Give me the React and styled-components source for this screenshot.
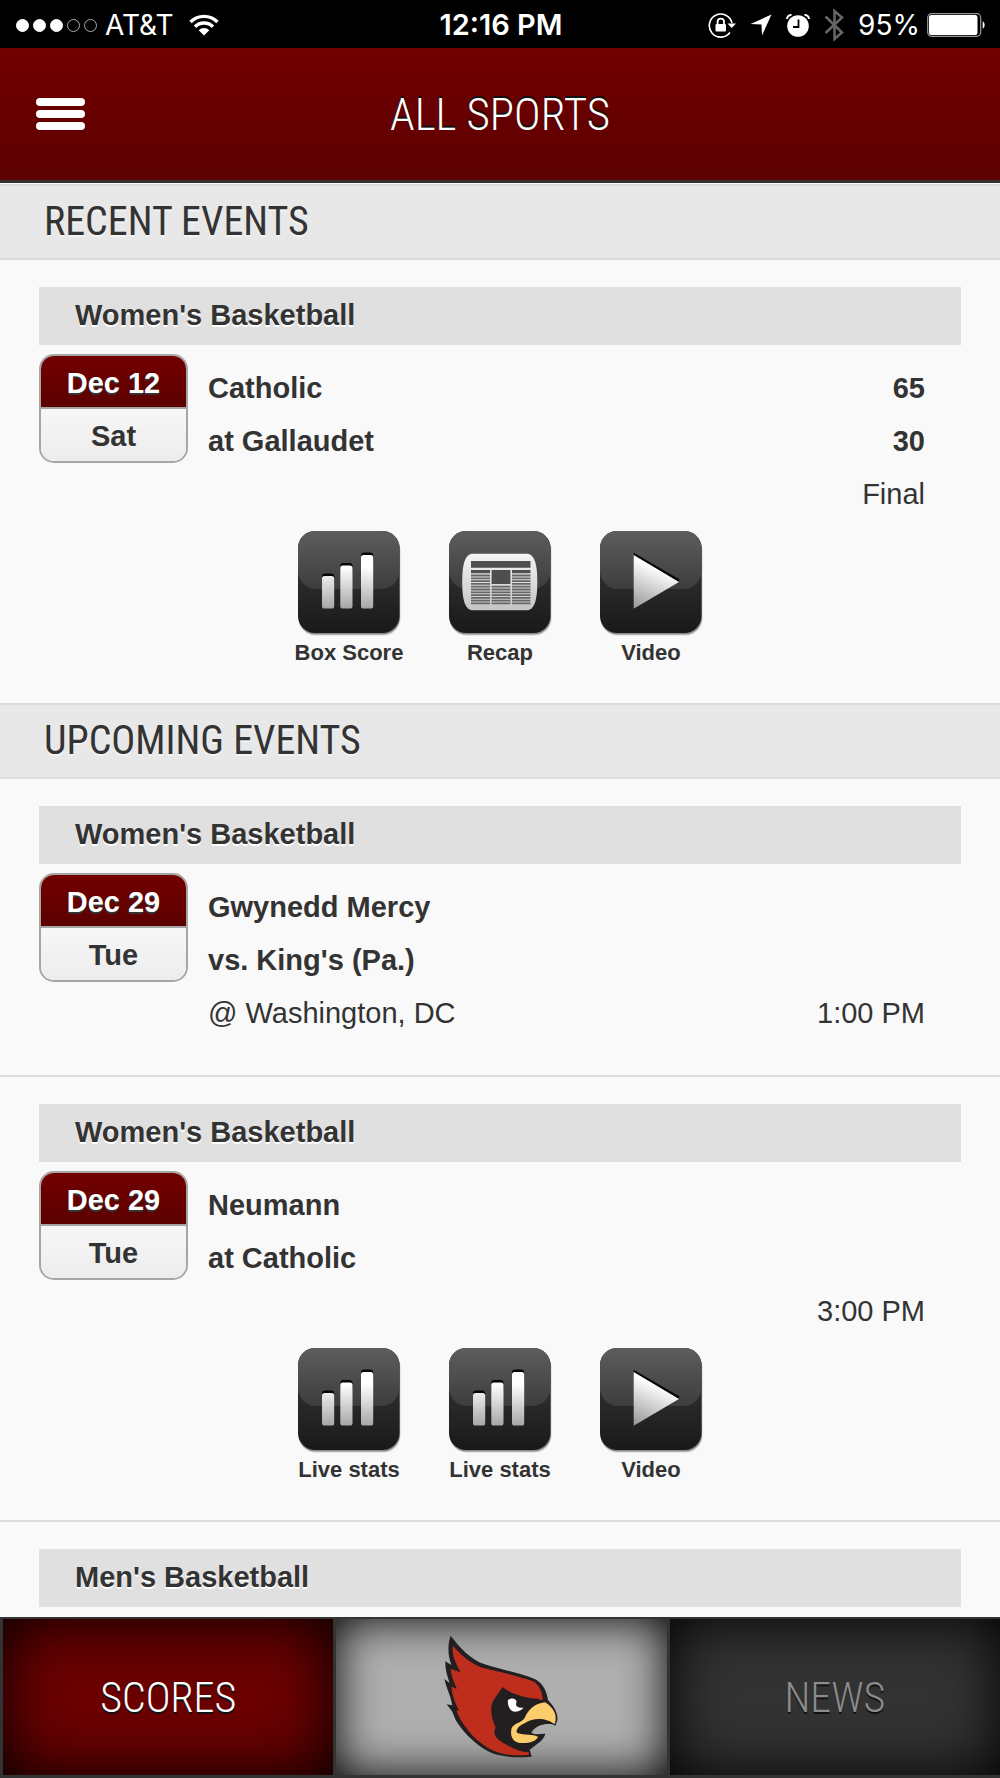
import React from 'react';
import styled, { createGlobalStyle } from 'styled-components';

const colors = {
  ink: '#333',
  page: '#f9f9f9',
  band: '#e8e8e8',
  line: '#dcdcdc',
  redTop: '#720000',
  redBottom: '#5c0000',
};

const fonts = {
  body: '"Liberation Sans", Arial, sans-serif',
  narrow: '"Roboto Condensed", "Arial Narrow", sans-serif',
  status: 'Inter, sans-serif',
};

const GlobalStyle = createGlobalStyle`
  * {
    box-sizing: border-box;
  }
  body {
    margin: 0;
    background: ${colors.page};
    color: ${colors.ink};
    font-family: ${fonts.body};
    font-size: 29px;
  }
  h1, h2, h3, p {
    margin: 0;
  }
`;

const Page = styled.div`
  display: flex;
  flex-direction: column;
  min-height: 100vh;
`;

const StatusBar = styled.div`
  display: grid;
  grid-template-columns: 1fr auto 1fr;
  align-items: center;
  height: 48px;
  padding: 0 14px 0 16px;
  background: #000;
  color: #fff;
  font-family: ${fonts.status};
  font-size: 28px;
  line-height: 50px;
`;

const StatusGroup = styled.div`
  display: flex;
  align-items: center;
  justify-content: ${(props) => props.$justify || 'flex-start'};
  gap: ${(props) => props.$gap}px;
`;

const Dots = styled.div`
  display: flex;
  gap: 4px;
`;

const Dot = styled.span`
  width: 13px;
  height: 13px;
  border: 1px solid ${(props) => (props.$on ? '#fff' : '#aaa')};
  border-radius: 50%;
  background: ${(props) => (props.$on ? '#fff' : 'transparent')};
`;

const Clock = styled.div`
  font-size: 29px;
  font-weight: 600;
`;

const Header = styled.header`
  display: grid;
  grid-template-columns: 1fr auto 1fr;
  align-items: center;
  height: 135px;
  padding: 0 36px;
  border-bottom: 3px solid ${colors.ink};
  background: linear-gradient(${colors.redTop}, ${colors.redBottom});
`;

const MenuButton = styled.button`
  display: flex;
  flex-direction: column;
  gap: 4px;
  width: 49px;
  padding: 0;
  border: 0;
  background: none;
`;

const MenuBar = styled.span`
  height: 8px;
  border-radius: 4px;
  background: #fff;
`;

const Title = styled.h1`
  color: #fff;
  font-family: ${fonts.narrow};
  font-size: 45px;
  font-weight: 350;
  text-shadow: 0 -2px 0 #111;
`;

const Main = styled.main`
  padding-top: 1px;
`;

const SectionTitle = styled.h2`
  height: 76px;
  padding: 0 44px;
  border: solid ${colors.line};
  border-width: 2px 0;
  background: ${colors.band};
  font-family: ${fonts.narrow};
  font-size: 40px;
  font-weight: 400;
  line-height: 72px;
  text-shadow: 0 2px 0 #f4f4f4;
`;

const EventBox = styled.article`
  padding: 27px 39px ${(props) => (props.$open ? 9 : 35)}px;

  & + & {
    border-top: 2px solid ${colors.line};
  }
`;

const Sport = styled.h3`
  height: 58px;
  padding: 0 36px;
  background: #e0e0e0;
  font-size: 29px;
  line-height: 57px;
  text-shadow: 0 2px 0 #fff;
`;

const EventBody = styled.div`
  display: flex;
  gap: 20px;
  padding: 9px 36px 0 0;
`;

const DateBox = styled.div`
  display: flex;
  flex-direction: column;
  width: 149px;
  height: 109px;
  overflow: hidden;
  border: 2px solid #a6a6a6;
  border-radius: 15px;
  font-weight: 700;
  line-height: 54px;
  text-align: center;
`;

const DateDay = styled.div`
  height: 53px;
  border-bottom: 2px solid #a6a6a6;
  background: linear-gradient(${colors.redTop}, ${colors.redBottom});
  color: #fff;
  text-shadow: 0 2px 0 ${colors.ink};
`;

const Weekday = styled.div`
  flex: 1;
  background: linear-gradient(#f7f7f7, #ececec);
`;

const Lines = styled.div`
  flex: 1;
  padding-top: 8px;
`;

const Line = styled.div`
  display: flex;
  justify-content: space-between;
  height: 53px;
  font-weight: ${(props) => (props.$bold ? 700 : 400)};
  line-height: 53px;
`;

const Links = styled.nav`
  display: flex;
  justify-content: center;
  padding-top: 10px;
`;

const MediaLink = styled.a`
  display: flex;
  flex-direction: column;
  align-items: center;
  width: 151px;
  color: ${colors.ink};
  font-size: 22px;
  font-weight: 700;
  line-height: 31px;
  text-decoration: none;
`;

const TabBar = styled.nav`
  position: sticky;
  bottom: 0;
  display: grid;
  grid-template-columns: repeat(3, 1fr);
  gap: 3px;
  height: 161px;
  margin-top: auto;
  padding: 2px 0 3px 3px;
  background: ${colors.ink};
`;

const Tab = styled.a`
  display: flex;
  align-items: center;
  justify-content: center;
  background: ${(props) => props.$bg};
  box-shadow: inset 0 0 ${(props) => props.$shade}px #000;
  color: ${(props) => props.$color};
  font-family: ${fonts.narrow};
  font-size: 42px;
  font-weight: 350;
  text-decoration: none;
  text-shadow: 0 2px 0 #111;
`;

const WifiIcon = () => (
  <svg width="30" height="22" viewBox="0 0 30 22" aria-hidden="true">
    <path d="M1.5 8 A19 19 0 0 1 28.5 8" fill="none" stroke="#fff" strokeWidth="3.4" />
    <path d="M6 12.7 A12.7 12.7 0 0 1 24 12.7" fill="none" stroke="#fff" strokeWidth="3.4" />
    <path d="M9.7 16.2 A7.6 7.6 0 0 1 20.3 16.2 L15 21.5 Z" fill="#fff" />
  </svg>
);

const LockIcon = () => (
  <svg width="28" height="26" viewBox="0 0 28 26" aria-hidden="true">
    <path d="M24 11 A11.5 11.5 0 1 0 22 20.5" fill="none" stroke="#fff" strokeWidth="1.6" />
    <path d="M19.5 11.5 H28 L23.7 16 Z" fill="#fff" />
    <rect x="7.5" y="12" width="10.5" height="7.5" rx="1" fill="#fff" />
    <path d="M9.6 12.5 V9.8 A3.2 3.2 0 0 1 16 9.8 V12.5" fill="none" stroke="#fff" strokeWidth="1.8" />
  </svg>
);

const LocationIcon = () => (
  <svg width="22" height="22" viewBox="0 0 22 22" aria-hidden="true">
    <path d="M21.5 0.5 L12 21.5 L11.5 10.5 L0.5 10 Z" fill="#fff" />
  </svg>
);

const AlarmIcon = () => (
  <svg width="24" height="23" viewBox="0 0 24 23" aria-hidden="true">
    <circle cx="12" cy="12" r="10.8" fill="#fff" />
    <path d="M1 5 A4 4 0 0 1 5.5 1 M18.5 1 A4 4 0 0 1 23 5" fill="none" stroke="#fff" strokeWidth="2" />
    <path d="M12.5 5.5 V13 H7" fill="none" stroke="#000" strokeWidth="1.8" />
  </svg>
);

const BluetoothIcon = () => (
  <svg width="20" height="34" viewBox="0 0 20 34" aria-hidden="true">
    <path
      d="M1.5 8.5 L18 24.5 L10.5 31 V3 L18 9.5 L1.5 25"
      fill="none"
      stroke="#666"
      strokeWidth="2.6"
    />
  </svg>
);

const BatteryIcon = () => (
  <svg width="59" height="24" viewBox="0 0 59 24" aria-hidden="true">
    <rect x="0.7" y="0.7" width="53" height="22.6" rx="4" fill="none" stroke="#999" strokeWidth="1.2" />
    <rect x="2" y="2" width="48.5" height="20" rx="2.5" fill="#fff" />
    <path d="M55.7 8 A5 5 0 0 1 55.7 16 Z" fill="#fff" />
  </svg>
);

const StatsGlyph = () => (
  <g>
    {[[24, 45], [42.3, 34.5], [63, 24]].map(([x, y]) => (
      <g key={x}>
        <rect x={x} y={y - 2.4} width="12.2" height="12" rx="3" fill="#050505" />
        <rect x={x} y={y} width="12.2" height={77.5 - y} rx="2.6" fill="url(#silver)" />
      </g>
    ))}
  </g>
);

const NewsGlyph = () => (
  <g>
    <path
      d="M24 22.7 H77.5 C85.5 22.7 88.3 33 88.3 51 S85.5 79.3 77.5 79.3 H24 C16 79.3 13.2 69 13.2 51 S16 22.7 24 22.7 Z"
      fill="url(#paper)"
    />
    <path d="M22 30 H81.5 V36.7 H22 Z M22 39 H41 V42.3 H22 Z M63 39 H81.5 V42.3 H63 Z M42.6 39 H61.4 V53 H42.6 Z" fill="#4e4e4e" />
    {[44.5, 47.3, 50.1, 52.9, 55.7, 58.5, 61.3, 64.1, 66.9, 69.7, 72.3].map((y) => (
      <path
        key={y}
        d={y < 54 ? `M22 ${y} H41 M63 ${y} H81.5` : `M22 ${y} H41 M42.6 ${y} H61.4 M63 ${y} H81.5`}
        stroke="#666"
        strokeWidth="1.8"
      />
    ))}
  </g>
);

const PlayGlyph = () => (
  <g>
    <path d="M33.7 21.7 L79.5 48.5 L78 52 L33.7 27 Z" fill="#050505" />
    <path d="M33.7 24 L79 51 L33.7 77.7 Z" fill="url(#play)" />
  </g>
);

const glyphs = { stats: StatsGlyph, news: NewsGlyph, play: PlayGlyph };

const MediaIcon = ({ kind }) => {
  const Glyph = glyphs[kind];
  return (
    <svg width="106" height="106" viewBox="-2 0 106 106" aria-hidden="true">
      <defs>
        <linearGradient id="silver" gradientUnits="userSpaceOnUse" x1="0" y1="36" x2="0" y2="78">
          <stop offset="0" stopColor="#fff" />
          <stop offset="1" stopColor="#a5a5a5" />
        </linearGradient>
        <linearGradient id="play" x1="0.4" y1="0.2" x2="0.1" y2="1">
          <stop offset="0" stopColor="#fff" />
          <stop offset="1" stopColor="#999" />
        </linearGradient>
        <linearGradient id="paper" x1="0" y1="0" x2="0" y2="1">
          <stop offset="0" stopColor="#f5f5f5" />
          <stop offset="1" stopColor="#c4c4c4" />
        </linearGradient>
        <linearGradient id="tile" x1="0" y1="0" x2="0" y2="1">
          <stop offset="0" stopColor="#3c3c3c" />
          <stop offset="1" stopColor="#191919" />
        </linearGradient>
        <linearGradient id="gloss" x1="0" y1="0" x2="0" y2="1">
          <stop offset="0" stopColor="#5d5d5d" />
          <stop offset="1" stopColor="#3d3d3d" />
        </linearGradient>
      </defs>
      <rect x="0.5" y="2.5" width="102" height="102" rx="17" fill="#000" opacity="0.15" />
      <rect x="0.5" y="1.5" width="101.5" height="102" rx="17" fill="#000" opacity="0.35" />
      <rect width="101.5" height="102" rx="17" fill="url(#tile)" />
      <path
        d="M17 0 H84.5 A17 17 0 0 1 101.5 17 V42 C99 52 93 58 83 58 H18.5 C8.5 58 2.5 52 0 42 V17 A17 17 0 0 1 17 0 Z"
        fill="url(#gloss)"
      />
      <Glyph />
    </svg>
  );
};

const CardinalLogo = () => (
  <svg width="114" height="124" viewBox="73 78 342 372" role="img" aria-label="Cardinals">
    <path
      fill="#231f20"
      d="M93 80 C120 115 150 150 195 166 C240 181 310 193 350 212 C372 226 382 250 385 273 C402 292 416 312 413 334 L407 350 L398 346 C380 343 350 346 335 371 C350 380 362 373 377 374 C371 395 355 402 330 422 L336 443 C290 447 240 445 205 427 C160 402 125 362 108 333 L98 308 L81 286 L98 289 L92 265 C85 245 79 230 74 210 L90 222 C82 200 76 180 77 157 L95 168 C86 145 82 110 93 80 Z"
    />
    <path
      fill="#bf2d1c"
      d="M100 110 C130 145 160 168 195 178 C245 190 310 205 343 218 C360 230 370 253 369 272 C364 274 361 274 357 269 C325 268 280 258 248 234 C238 255 212 275 215 305 C215 325 224 345 228 356 C214 382 240 396 262 408 C285 422 305 430 327 430 L328 437 C285 442 240 438 205 417 C160 390 125 345 110 304 L119 305 C110 290 98 262 95 233 L112 239 C102 220 95 200 93 180 L123 190 C110 165 95 140 100 110 Z"
    />
    <path fill="#fff" d="M265 273 C273 266 288 266 291 278 C286 290 291 297 312 296 C302 306 290 310 279 307 C268 302 263 285 265 273 Z" />
    <path
      fill="#fdcd6c"
      d="M376 280 C395 292 410 310 408 330 C408 340 404 347 404 345 C385 330 345 322 315 343 C300 349 290 358 291 370 C300 380 330 373 355 383 C350 398 325 404 300 402 C278 398 270 380 276 357 C282 343 305 342 315 327 C325 303 345 283 376 280 Z"
    />
  </svg>
);

const recent = [
  {
    sport: "Women's Basketball",
    date: 'Dec 12',
    day: 'Sat',
    lines: [['Catholic', '65'], ['at Gallaudet', '30'], ['', 'Final']],
    links: [['stats', 'Box Score'], ['news', 'Recap'], ['play', 'Video']],
  },
];

const upcoming = [
  {
    sport: "Women's Basketball",
    date: 'Dec 29',
    day: 'Tue',
    lines: [['Gwynedd Mercy', ''], ["vs. King's (Pa.)", ''], ['@ Washington, DC', '1:00 PM']],
  },
  {
    sport: "Women's Basketball",
    date: 'Dec 29',
    day: 'Tue',
    lines: [['Neumann', ''], ['at Catholic', ''], ['', '3:00 PM']],
    links: [['stats', 'Live stats'], ['stats', 'Live stats'], ['play', 'Video']],
  },
  { sport: "Men's Basketball" },
];

const Event = ({ sport, date, day, lines, links }) => (
  <EventBox $open={!lines}>
    <Sport>{sport}</Sport>
    {lines && (
      <EventBody>
        <DateBox>
          <DateDay>{date}</DateDay>
          <Weekday>{day}</Weekday>
        </DateBox>
        <Lines>
          {lines.map(([left, right], i) => (
            <Line key={i} $bold={i < 2}>
              <span>{left}</span>
              <span>{right}</span>
            </Line>
          ))}
        </Lines>
      </EventBody>
    )}
    {links && (
      <Links>
        {links.map(([kind, label], i) => (
          <MediaLink key={i} href="#">
            <MediaIcon kind={kind} />
            {label}
          </MediaLink>
        ))}
      </Links>
    )}
  </EventBox>
);

const App = () => (
  <Page>
    <GlobalStyle />
    <StatusBar>
      <StatusGroup $gap={15}>
        <StatusGroup $gap={8}>
          <Dots>
            {[1, 1, 1, 0, 0].map((on, i) => (
              <Dot key={i} $on={on} />
            ))}
          </Dots>
          <span>AT&amp;T</span>
        </StatusGroup>
        <WifiIcon />
      </StatusGroup>
      <Clock>12:16 PM</Clock>
      <StatusGroup $justify="flex-end" $gap={14}>
        <LockIcon />
        <LocationIcon />
        <AlarmIcon />
        <BluetoothIcon />
        <StatusGroup $gap={7}>
          <span>95%</span>
          <BatteryIcon />
        </StatusGroup>
      </StatusGroup>
    </StatusBar>
    <Header>
      <MenuButton aria-label="Menu">
        <MenuBar />
        <MenuBar />
        <MenuBar />
      </MenuButton>
      <Title>ALL SPORTS</Title>
    </Header>
    <Main>
      <SectionTitle>RECENT EVENTS</SectionTitle>
      {recent.map((event, i) => (
        <Event key={i} {...event} />
      ))}
      <SectionTitle>UPCOMING EVENTS</SectionTitle>
      {upcoming.map((event, i) => (
        <Event key={i} {...event} />
      ))}
    </Main>
    <TabBar>
      <Tab href="#" $bg="#6c0000" $shade={64} $color="#fff">
        SCORES
      </Tab>
      <Tab href="#" $bg="#afafaf" $shade={46} $color="#fff">
        <CardinalLogo />
      </Tab>
      <Tab href="#" $bg="#333" $shade={60} $color="#8c8c8c">
        NEWS
      </Tab>
    </TabBar>
  </Page>
);

export default App;
